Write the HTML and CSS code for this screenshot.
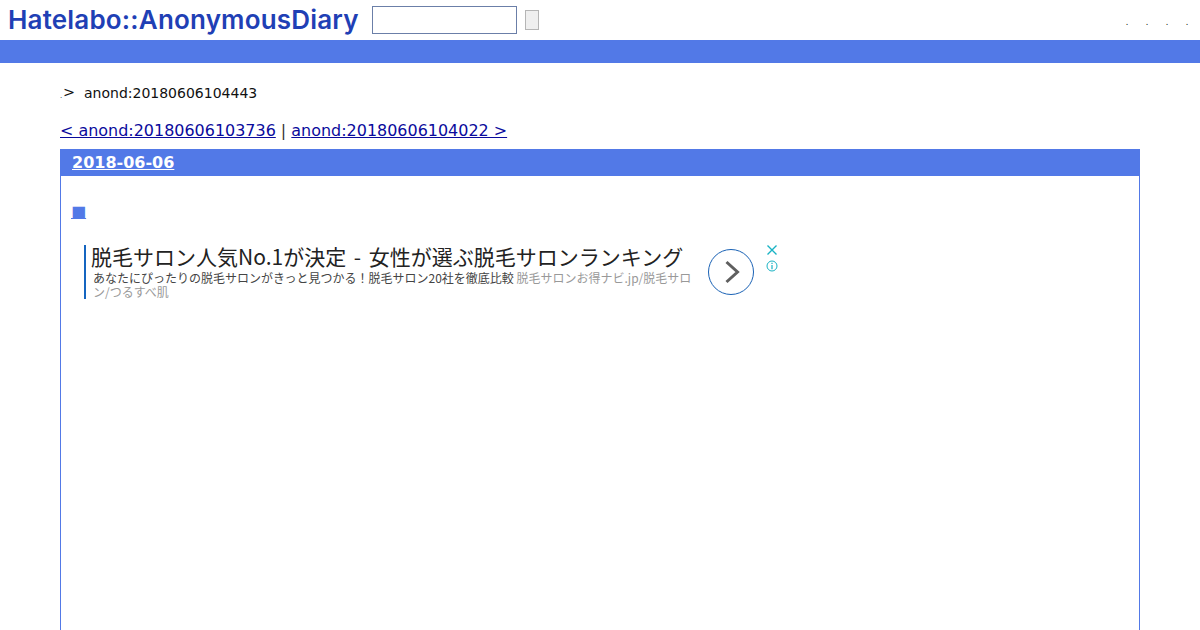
FILE: index.html
```html
<!DOCTYPE html>
<html lang="ja">
<head>
    <meta charset="UTF-8">
    <title>anond:20180606104443</title>
    <link rel="stylesheet" href="styles.css">
</head>
<body>
    <div id="header">
        <a class="logo" href="#">Hatelabo::AnonymousDiary</a>
        <form class="search">
            <input type="text" class="search-text">
            <button type="button" class="search-btn"></button>
        </form>
        <ul class="menu">
            <li>.</li>
            <li>.</li>
            <li>.</li>
            <li>.</li>
        </ul>
    </div>
    <div id="bar"></div>

    <div class="breadcrumb"><span class="dot">.</span><span class="gt">&gt;</span><span>anond:20180606104443</span></div>

    <div class="pager">
        <a href="#">&lt; anond:20180606103736</a> | <a href="#">anond:20180606104022 &gt;</a>
    </div>

    <div class="day">
        <h2 class="day-title"><a href="#">2018-06-06</a></h2>
        <div class="section">
            <h3 class="section-title"><a href="#">■</a></h3>
            <div class="ad">
                <div class="ad-text">
                    <div class="ad-title">脱毛サロン人気No.1が決定 - 女性が選ぶ脱毛サロンランキング</div>
                    <div class="ad-desc">あなたにぴったりの脱毛サロンがきっと見つかる！脱毛サロン20社を徹底比較 <span class="ad-url">脱毛サロンお得ナビ.jp/脱毛サロン/つるすべ肌</span></div>
                </div>
                <svg class="ad-arrow" width="46" height="46" viewBox="0 0 46 46">
                    <circle cx="23" cy="23" r="22.5" fill="none" stroke="#1a62b5" stroke-width="1"/>
                    <path d="M18.5 13 L29.5 23 L18.5 33" fill="none" stroke="#5f5f5f" stroke-width="3"/>
                </svg>
                <div class="ad-icons">
                    <svg width="12" height="12" viewBox="0 0 12 12">
                        <path d="M1.5 1.5 L10.5 10.5 M10.5 1.5 L1.5 10.5" stroke="#19b3c4" stroke-width="1.4"/>
                    </svg>
                    <svg width="12" height="12" viewBox="0 0 12 12">
                        <circle cx="6" cy="6" r="5" fill="none" stroke="#19b3c4" stroke-width="1"/>
                        <path d="M6 5 V9.2 M6 2.8 V4" stroke="#19b3c4" stroke-width="1.2"/>
                    </svg>
                </div>
            </div>
        </div>
    </div>
</body>
</html>
```

FILE: styles.css
```css
body {
    margin: 0;
    font-family: "DejaVu Sans", sans-serif;
    font-size: 16px;
    color: #333;
    background: #fff;
    overflow: hidden;
}

a {
    color: #0a0a9c;
}

#header {
    display: flex;
    align-items: flex-start;
    height: 40px;
    padding-left: 8px;
}

.logo {
    font-family: "Inter", sans-serif;
    font-weight: 600;
    font-size: 26px;
    letter-spacing: 0.18px;
    line-height: 40px;
    color: #1f40b5;
    text-decoration: none;
    width: 364px;
    flex: none;
    white-space: nowrap;
}

.search {
    display: flex;
    align-items: center;
    gap: 8px;
    padding-top: 6px;
}

.search-text {
    width: 145px;
    height: 28px;
    box-sizing: border-box;
    border: 1px solid #6b7fa8;
    padding: 0;
    margin: 0;
}

.search-btn {
    width: 14px;
    height: 20px;
    box-sizing: border-box;
    border: 1px solid #b5b5b5;
    background: #efefef;
    padding: 0;
    margin: 0;
}

.menu {
    display: flex;
    gap: 16px;
    list-style: none;
    margin: 0 11px 0 auto;
    padding: 18px 0 0;
    font-size: 8px;
    color: #000;
}

.menu li {
    width: 4px;
    text-align: center;
}

#bar {
    height: 23px;
    background: #5279e7;
}

.breadcrumb {
    display: flex;
    margin: 21px 60px 0;
    font-size: 14px;
    line-height: 18px;
    color: #111;
}

.breadcrumb .dot {
    font-size: 7px;
    width: 3px;
    padding-top: 3px;
}

.breadcrumb .gt {
    width: 21px;
    font-size: 14.4px;
    line-height: 17px;
}

.pager {
    margin: 16px 60px 0;
    font-size: 15.96px;
    line-height: 20px;
}

.day {
    margin: 8px 60px 0;
    height: 480px;
    border: 1px solid #5279e7;
    border-bottom: 0;
}

.day-title {
    margin: 0;
    padding: 0 11px;
    height: 26px;
    background: #5279e7;
    font-size: 16px;
    line-height: 26px;
}

.day-title a {
    color: #fff;
}

.section {
    padding: 26px 10px 0;
}

.section-title {
    margin: 0;
    font-size: 16px;
    font-weight: 400;
    line-height: 20px;
}

.section-title a {
    color: #5279e7;
}

.ad {
    display: flex;
    align-items: flex-start;
    margin: 23px 0 0 13px;
    width: 700px;
    font-family: "Noto Sans CJK JP", sans-serif;
}

.ad-text {
    width: 611px;
    height: 54px;
    flex: none;
    box-sizing: border-box;
    border-left: 2px solid #1565c0;
    padding-left: 5px;
}

.ad-title {
    font-size: 21px;
    word-spacing: 3px;
    line-height: 23px;
    color: #222;
    white-space: nowrap;
}

.ad-desc {
    padding: 3px 0 0 2px;
    font-size: 12px;
    line-height: 13.5px;
    color: #444;
}

.ad-url {
    color: #999;
}

.ad-arrow {
    flex: none;
    margin: 4px 0 0 13px;
}

.ad-icons {
    display: flex;
    flex-direction: column;
    gap: 4px;
    margin: -1px 0 0 12px;
    flex: none;
}
```
